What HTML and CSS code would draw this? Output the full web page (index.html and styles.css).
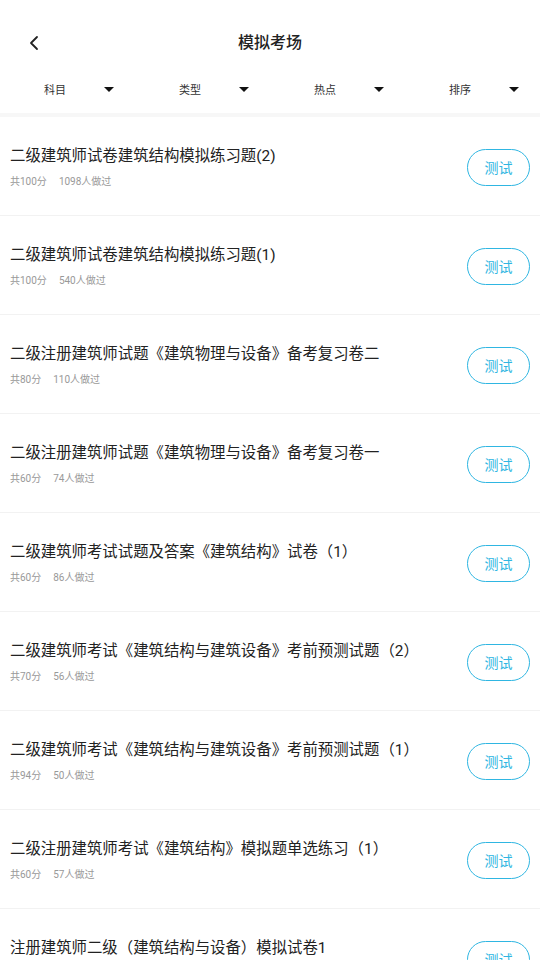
FILE: index.html
```html
<!DOCTYPE html>
<html lang="zh-CN">
<head>
  <meta charset="UTF-8" />
  <title>模拟考场</title>
  <link rel="stylesheet" href="styles.css">
</head>
<body>

<header class="topbar">
  <button class="back" aria-label="返回">
    <svg width="12" height="16" viewBox="0 0 12 16"><path d="M9 2 L3 8 L9 14" fill="none" stroke="#222" stroke-width="1.8" stroke-linecap="round" stroke-linejoin="round"/></svg>
  </button>
  <h1>模拟考场</h1>
</header>

<nav class="filters">
  <div class="filter"><span>科目</span><i class="caret"></i></div>
  <div class="filter"><span>类型</span><i class="caret"></i></div>
  <div class="filter"><span>热点</span><i class="caret"></i></div>
  <div class="filter"><span>排序</span><i class="caret"></i></div>
</nav>

<main class="list">
  <div class="paper">
    <div class="info">
      <h2>二级建筑师试卷建筑结构模拟练习题(2)</h2>
      <div class="meta"><span>共100分</span><span>1098人做过</span></div>
    </div>
    <button class="test">测试</button>
  </div>
  <div class="paper">
    <div class="info">
      <h2>二级建筑师试卷建筑结构模拟练习题(1)</h2>
      <div class="meta"><span>共100分</span><span>540人做过</span></div>
    </div>
    <button class="test">测试</button>
  </div>
  <div class="paper">
    <div class="info">
      <h2>二级注册建筑师试题《建筑物理与设备》备考复习卷二</h2>
      <div class="meta"><span>共80分</span><span>110人做过</span></div>
    </div>
    <button class="test">测试</button>
  </div>
  <div class="paper">
    <div class="info">
      <h2>二级注册建筑师试题《建筑物理与设备》备考复习卷一</h2>
      <div class="meta"><span>共60分</span><span>74人做过</span></div>
    </div>
    <button class="test">测试</button>
  </div>
  <div class="paper">
    <div class="info">
      <h2>二级建筑师考试试题及答案《建筑结构》试卷（1）</h2>
      <div class="meta"><span>共60分</span><span>86人做过</span></div>
    </div>
    <button class="test">测试</button>
  </div>
  <div class="paper">
    <div class="info">
      <h2>二级建筑师考试《建筑结构与建筑设备》考前预测试题（2）</h2>
      <div class="meta"><span>共70分</span><span>56人做过</span></div>
    </div>
    <button class="test">测试</button>
  </div>
  <div class="paper">
    <div class="info">
      <h2>二级建筑师考试《建筑结构与建筑设备》考前预测试题（1）</h2>
      <div class="meta"><span>共94分</span><span>50人做过</span></div>
    </div>
    <button class="test">测试</button>
  </div>
  <div class="paper">
    <div class="info">
      <h2>二级注册建筑师考试《建筑结构》模拟题单选练习（1）</h2>
      <div class="meta"><span>共60分</span><span>57人做过</span></div>
    </div>
    <button class="test">测试</button>
  </div>
  <div class="paper">
    <div class="info">
      <h2>注册建筑师二级（建筑结构与设备）模拟试卷1</h2>
      <div class="meta"><span>共100分</span><span>45人做过</span></div>
    </div>
    <button class="test">测试</button>
  </div>
</main>

</body>
</html>
```

FILE: styles.css
```css
:root {
  --text: #222222;
  --muted: #999999;
  --accent: #2fb6e2;
  --line: #f2f2f2;
}

body {
  margin: 0;
  background: #ffffff;
  color: var(--text);
  font-family: Roboto, "Noto Sans CJK SC", sans-serif;
  height: 960px;
  overflow: hidden;
}

.topbar {
  position: relative;
  height: 66px;
  display: flex;
  align-items: center;
  justify-content: center;
  padding-top: 20px;
  box-sizing: border-box;
}

.topbar h1 {
  margin: 0;
  font-size: 16px;
  font-weight: 500;
  line-height: 22px;
}

.back {
  position: absolute;
  left: 28px;
  top: 35px;
  padding: 0;
  border: none;
  background: none;
  display: flex;
}

.filters {
  display: grid;
  grid-template-columns: repeat(4, 1fr);
  height: 51px;
  padding-bottom: 1px;
  box-sizing: border-box;
  border-bottom: 4px solid #f7f7f7;
}

.filter {
  display: flex;
  align-items: center;
  justify-content: space-between;
  padding: 0 21px 0 44px;
  font-size: 11px;
  color: #333;
}

.caret {
  width: 0;
  height: 0;
  border-left: 5px solid transparent;
  border-right: 5px solid transparent;
  border-top: 5px solid #111;
}

.paper {
  display: flex;
  align-items: center;
  justify-content: space-between;
  padding: 28px 10px 26px 10px;
  border-bottom: 1px solid var(--line);
}

.info {
  min-width: 0;
}

.paper h2 {
  margin: 0;
  font-size: 15.4px;
  font-weight: 400;
  line-height: 22px;
  white-space: nowrap;
}

.meta {
  margin-top: 8px;
  display: flex;
  gap: 12px;
  font-size: 10px;
  line-height: 14px;
  color: var(--muted);
}

.test {
  flex: none;
  width: 63px;
  height: 37px;
  border: 1.5px solid var(--accent);
  border-radius: 19px;
  background: #fff;
  color: var(--accent);
  font-family: inherit;
  font-size: 14px;
  padding: 0;
}
```
